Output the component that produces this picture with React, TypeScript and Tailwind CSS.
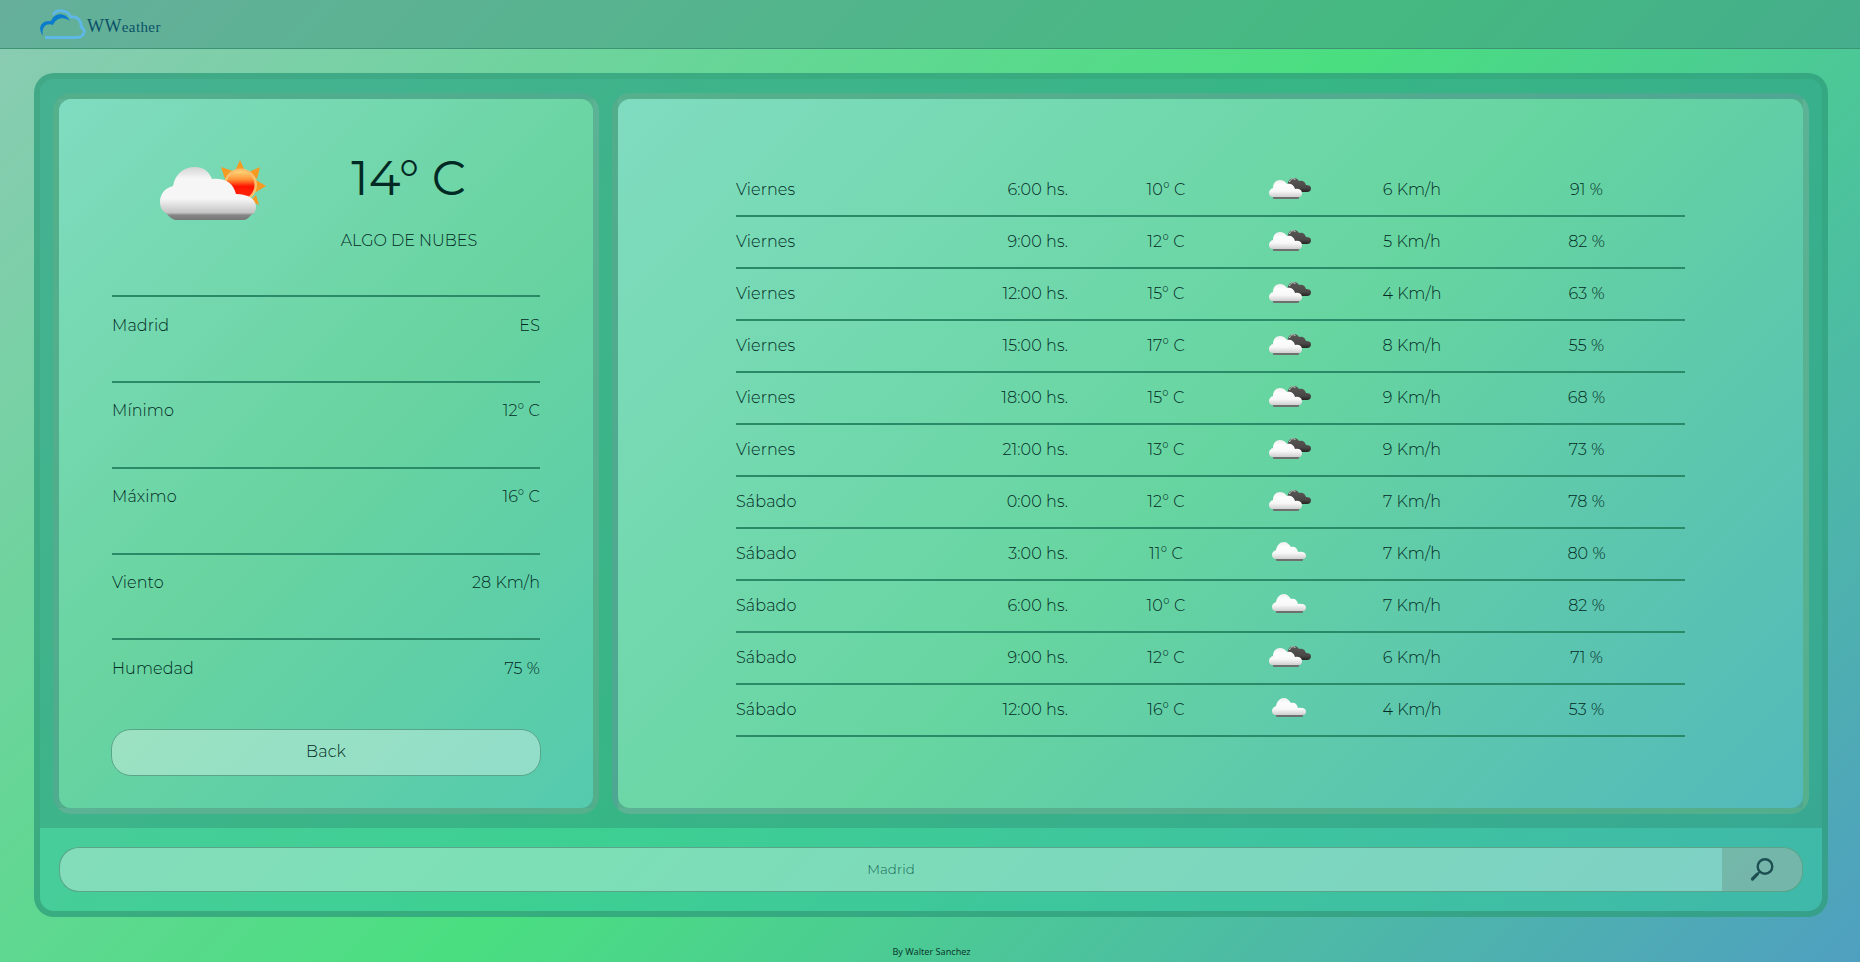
import React from "react";

type Sky = "broken" | "cloud";
type Forecast = [string, string, string, Sky, string, string];

const forecast: Forecast[] = [
  ["Viernes", "6:00 hs.", "10° C", "broken", "6 Km/h", "91 %"],
  ["Viernes", "9:00 hs.", "12° C", "broken", "5 Km/h", "82 %"],
  ["Viernes", "12:00 hs.", "15° C", "broken", "4 Km/h", "63 %"],
  ["Viernes", "15:00 hs.", "17° C", "broken", "8 Km/h", "55 %"],
  ["Viernes", "18:00 hs.", "15° C", "broken", "9 Km/h", "68 %"],
  ["Viernes", "21:00 hs.", "13° C", "broken", "9 Km/h", "73 %"],
  ["Sábado", "0:00 hs.", "12° C", "broken", "7 Km/h", "78 %"],
  ["Sábado", "3:00 hs.", "11° C", "cloud", "7 Km/h", "80 %"],
  ["Sábado", "6:00 hs.", "10° C", "cloud", "7 Km/h", "82 %"],
  ["Sábado", "9:00 hs.", "12° C", "broken", "6 Km/h", "71 %"],
  ["Sábado", "12:00 hs.", "16° C", "cloud", "4 Km/h", "53 %"],
];

const details = [
  ["Madrid", "ES"],
  ["Mínimo", "12° C"],
  ["Máximo", "16° C"],
  ["Viento", "28 Km/h"],
  ["Humedad", "75 %"],
];

function Gradients() {
  return (
    <svg className="absolute h-0 w-0" aria-hidden="true">
      <defs>
        <linearGradient id="white" x1="0" y1="0" x2="0" y2="1">
          <stop offset="0" stopColor="#d4d4d4" />
          <stop offset="0.22" stopColor="#f6f6f6" />
          <stop offset="0.6" stopColor="#f6f6f6" />
          <stop offset="0.86" stopColor="#c4c4c4" />
          <stop offset="0.91" stopColor="#858585" />
          <stop offset="1" stopColor="#777777" />
        </linearGradient>
        <linearGradient id="small" x1="0" y1="0" x2="0" y2="1">
          <stop offset="0" stopColor="#efefef" />
          <stop offset="0.3" stopColor="#fdfdfd" />
          <stop offset="0.65" stopColor="#f8f8f8" />
          <stop offset="1" stopColor="#cfcfcf" />
        </linearGradient>
        <linearGradient id="dark" x1="0" y1="0" x2="0" y2="1">
          <stop offset="0" stopColor="#5a5856" />
          <stop offset="0.7" stopColor="#4a4846" />
          <stop offset="1" stopColor="#242322" />
        </linearGradient>
        <linearGradient id="sun" x1="0" y1="0" x2="0" y2="1">
          <stop offset="0" stopColor="#ffd678" />
          <stop offset="0.3" stopColor="#ff9438" />
          <stop offset="0.55" stopColor="#ff1400" />
          <stop offset="1" stopColor="#ff2a10" />
        </linearGradient>
      </defs>
    </svg>
  );
}

function PartlySunny() {
  return (
    <svg className="h-[64px] w-[112px]" viewBox="0 0 112 64">
      <path
        fill="#f59a23"
        d="M81 0l5 11H76zM101 7l-3 12-8-7zM107 26l-10 6V20zM100 45l-9-4 6-6zM62 7l12 4-8 8z"
      />
      <circle cx="81.500" cy="25" r="16.500" fill="#fbbf6c" />
      <circle cx="81.500" cy="25" r="14" fill="url(#sun)" />
      <path
        fill="url(#white)"
        d="M16 60C13 59 10 57 8 54 3 51 1 47 1 42c0-8 5-14 13-16C16 14 25 7 36 7c8 0 14 4 17 12 12-1 21 3 24 15 12 0 20 5 20 13 0 4-2 7-5 8-2 3-5 5-8 5z"
      />
    </svg>
  );
}

function SkyIcon({ sky }: { sky: Sky }) {
  if (sky === "broken") {
    return (
      <svg className="h-[23px] w-[42px] -translate-y-[2px]" viewBox="0 0 42 23">
        <path
          fill="url(#dark)"
          d="M19 10c-1-6 2-9 6-9 2 0 4 1 5 3 4-1 6 1 7 4 3 0 5 1 5 3 0 3-2 4-4 4H25z"
        />
        <path fill="none" stroke="#d5e2da" strokeWidth="0.9" d="M20.500 5c1-4 5-4 6-2" />
        <path fill="#6f6f6f" d="M3 18h28l-1.500 4h-25z" />
        <path
          fill="url(#small)"
          d="M4 20c-3 0-4-2-4-4 0-2 1-4 4-5 0-5 3-8 7-8 3 0 6 2 7 4 4-1 7 1 8 5 4-1 7 1 7 4 0 2-1 4-3 4z"
        />
      </svg>
    );
  }
  return (
    <svg className="-ml-[2px] h-[19px] w-[34px] -translate-y-[3px]" viewBox="0 0 34 19">
      <path fill="#6f6f6f" d="M3 15h29l-1.500 4h-26z" />
      <path
        fill="url(#small)"
        d="M4 17c-3 0-4-2-4-4 0-2 1-4 4-5 1-5 4-8 8-8 3 0 5 2 7 5 4-1 6 1 7 5 5-1 8 1 8 3.500 0 2-1 3.500-3 3.500z"
      />
    </svg>
  );
}

function Logo() {
  return (
    <div className="flex items-center">
      <svg className="h-[31px] w-[47px]" viewBox="0 0 47 31" fill="none">
        <path
          stroke="#5fb7e6"
          strokeWidth="2.8"
          d="M14 6C17 0 28 0 32 8c7-1 11 5 10 10 6 3 3 10-4 10.500H6"
        />
        <path
          fill="#0b7ccb"
          d="M4 27C-2 19 2 11 12 12c3-8 14-10 19 0-6-4-13-4-17 4C7 13 2 19 4 27z"
        />
      </svg>
      <span className="mt-[5px] ml-px font-['Liberation_Serif'] text-[15px] leading-5 font-normal tracking-[0.4px] text-[#0c5068]">
        <span className="text-[18px]">WW</span>eather
      </span>
    </div>
  );
}

export default function App() {
  return (
    <div className="flex h-[962px] flex-col overflow-hidden bg-[linear-gradient(135deg,#8bcbb4_0%,#4ade80_50%,#4fa0c0_100%)] font-['Montserrat','Inter',sans-serif] text-[16px] font-light tracking-[0.1px] text-[#022a24]">
      <Gradients />
      <header className="flex h-[49px] shrink-0 items-center border-b border-[#3d9474] bg-[#409482]/50 pl-[39px]">
        <Logo />
      </header>

      <main className="mr-[32px] ml-[34px] mt-6 flex h-[844px] shrink-0 flex-col overflow-hidden rounded-[20px] border-[6px] border-[#2d8264]/45 bg-[#35c69e]/60">
        <section className="flex h-[749px] shrink-0 gap-[13px] bg-[#2f8f73]/40 px-[13px] pt-[14px]">
          <article className="flex h-[721px] w-[546px] shrink-0 flex-col rounded-[18px] border-[6px] border-[#4c9f82]/70 bg-[linear-gradient(135deg,#80dcc0_0%,#69d4a0_50%,#55caae_100%)] px-[52px]">
            <div className="mx-px flex h-[198px] shrink-0 border-b-2 border-[#2a8a68]">
              <div className="w-[189px] pt-[61px] pl-[47px]">
                <PartlySunny />
              </div>
              <div className="flex flex-1 flex-col items-center pr-[23px] pt-[44px]">
                <p className="-ml-px text-[48px] leading-[70px] font-normal tracking-normal">14° C</p>
                <p className="mt-[16px] text-[16px] leading-6 tracking-normal">ALGO DE NUBES</p>
              </div>
            </div>
            {details.map(([label, value], i) => (
              <div
                key={label}
                className={
                  i === details.length - 1
                    ? "mx-px flex h-[88.6px] shrink-0 justify-between pt-[17px]"
                    : "mx-px flex h-[85.85px] shrink-0 justify-between border-b-2 border-[#2a8a68] pt-[16.6px]"
                }
              >
                <span>{label}</span>
                <span>{value}</span>
              </div>
            ))}
            <button className="h-[47px] w-[430px] shrink-0 rounded-[20px] border border-[#5aa589] bg-white/35 pb-px text-[16px]">
              Back
            </button>
          </article>

          <article className="flex h-[721px] w-[1197px] shrink-0 flex-col rounded-[18px] border-[6px] border-[#4c9f82]/70 bg-[linear-gradient(135deg,#80dcc0_0%,#67d5a0_50%,#53b9bb_100%)] px-[118px] pt-[66px]">
            {forecast.map(([day, hour, temp, sky, wind, humidity]) => (
              <div
                key={day + hour}
                className="grid h-[52px] shrink-0 grid-cols-[132px_200px_196px_51px_194px_155px] items-center border-b-2 border-[#2a8a68]"
              >
                <span>{day}</span>
                <span className="text-right">{hour}</span>
                <span className="text-center">{temp}</span>
                <span className="flex justify-center">
                  <SkyIcon sky={sky} />
                </span>
                <span className="text-center">{wind}</span>
                <span className="text-center">{humidity}</span>
              </div>
            ))}
          </article>
        </section>

        <form className="flex px-[19px] pt-[19px]" onSubmit={(e) => e.preventDefault()}>
          <input
            className="h-[45px] flex-1 rounded-l-[20px] border border-r-0 border-[#5aa589] bg-white/33 pb-[2px] text-center text-[13.33px] placeholder:text-[#176653]"
            placeholder="Madrid"
          />
          <button className="flex h-[45px] w-[81px] items-center justify-center rounded-r-[20px] border border-l-0 border-[#5aa589] bg-[#97b5ac]/60">
            <svg className="h-6 w-6" viewBox="0 0 24 24" fill="none" stroke="#1d4f52">
              <circle cx="15" cy="8.500" r="7.300" strokeWidth="2.400" />
              <path d="M10 13.500L7.500 16" strokeWidth="1.800" />
              <path d="M7.300 16.200L2.500 21" strokeWidth="3.200" strokeLinecap="round" />
            </svg>
          </button>
        </form>
      </main>

      <footer className="mt-[28px] pl-[3px] text-center font-['Noto_Sans'] text-[9.1px] leading-[14px] font-normal tracking-normal text-[#0b3a2c]">
        By Walter Sanchez
      </footer>
    </div>
  );
}
